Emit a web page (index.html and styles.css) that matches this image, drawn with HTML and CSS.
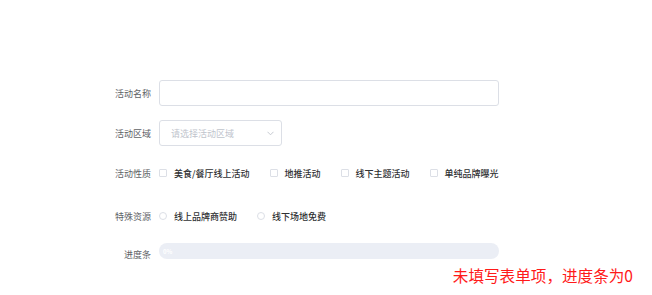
FILE: index.html
```html
<!DOCTYPE html>
<html lang="zh-CN">
<head>
    <meta charset="UTF-8">
    <title>活动表单</title>
    <link rel="stylesheet" href="styles.css">
</head>
<body>
    <main class="page">
        <form class="act-form">
            <div class="form-row row-name">
                <label class="form-label">活动名称</label>
                <input type="text" class="text-input">
            </div>
            <div class="form-row row-area">
                <label class="form-label">活动区域</label>
                <div class="select-box">
                    <span class="placeholder">请选择活动区域</span>
                    <svg class="chevron" width="7" height="5" viewBox="0 0 7 5">
                        <path d="M0.5 0.8 L3.5 3.8 L6.5 0.8" fill="none" stroke="#c0c4cc" stroke-width="0.9"/>
                    </svg>
                </div>
            </div>
            <div class="form-row row-type">
                <label class="form-label">活动性质</label>
                <div class="options">
                    <span class="option"><i class="check"></i>美食/餐厅线上活动</span>
                    <span class="option"><i class="check"></i>地推活动</span>
                    <span class="option"><i class="check"></i>线下主题活动</span>
                    <span class="option"><i class="check"></i>单纯品牌曝光</span>
                </div>
            </div>
            <div class="form-row row-res">
                <label class="form-label">特殊资源</label>
                <div class="options">
                    <span class="option"><i class="radio"></i>线上品牌商赞助</span>
                    <span class="option"><i class="radio"></i>线下场地免费</span>
                </div>
            </div>
            <div class="form-row row-progress">
                <label class="form-label">进度条</label>
                <div class="progress">
                    <span class="progress-text">0%</span>
                </div>
            </div>
        </form>
        <p class="hint">未填写表单项，进度条为0</p>
    </main>
</body>
</html>
```

FILE: styles.css
```css
:root {
    --border: #dcdfe6;
    --label: #606266;
    --text: #303133;
    --muted: #c0c4cc;
}
html, body {
    margin: 0;
    padding: 0;
    background: #fff;
    font-family: 'Noto Sans CJK SC', 'Noto Sans', sans-serif;
}
.page {
    width: 652px;
    height: 295px;
    padding-top: 80px;
    box-sizing: border-box;
    overflow: hidden;
}
.act-form {
    display: flex;
    flex-direction: column;
}
.form-row {
    display: flex;
    align-items: center;
    height: 26px;
}
.row-area {
    margin-top: 14px;
}
.row-type {
    margin-top: 14px;
}
.row-res {
    margin-top: 17px;
}
.row-progress {
    margin-top: 9px;
}
.form-label {
    width: 44px;
    margin-left: 107px;
    margin-right: 8px;
    text-align: right;
    font-size: 9px;
    color: var(--label);
    white-space: nowrap;
}
.row-progress .form-label {
    padding-top: 6px;
}
.text-input {
    width: 340px;
    height: 26px;
    box-sizing: border-box;
    border: 1px solid var(--border);
    border-radius: 3px;
    outline: none;
    padding: 0 8px;
}
.select-box {
    width: 123px;
    height: 26px;
    box-sizing: border-box;
    border: 1px solid var(--border);
    border-radius: 3px;
    display: flex;
    align-items: center;
    justify-content: space-between;
    padding: 0 7px 0 11px;
}
.placeholder {
    font-size: 9px;
    color: var(--muted);
}
.chevron {
    display: block;
}
.options {
    display: flex;
    align-items: center;
}
.option {
    display: flex;
    align-items: center;
    font-size: 9px;
    font-weight: 500;
    color: var(--text);
    margin-right: 20px;
    white-space: nowrap;
}
.check, .radio {
    display: inline-block;
    width: 8px;
    height: 8px;
    box-sizing: border-box;
    border: 1px solid var(--border);
    margin-right: 7px;
}
.check {
    border-radius: 1px;
}
.radio {
    border-radius: 50%;
}
.progress {
    width: 340px;
    height: 16px;
    border-radius: 8px;
    background: #ebeef5;
    display: flex;
    align-items: center;
    padding-left: 4px;
    box-sizing: border-box;
}
.progress-text {
    font-size: 6px;
    font-weight: bold;
    color: #fff;
}
.hint {
    margin: 1px 19px 0 0;
    line-height: 20px;
    text-align: right;
    font-size: 15.6px;
    color: #ff1a1a;
}
```
